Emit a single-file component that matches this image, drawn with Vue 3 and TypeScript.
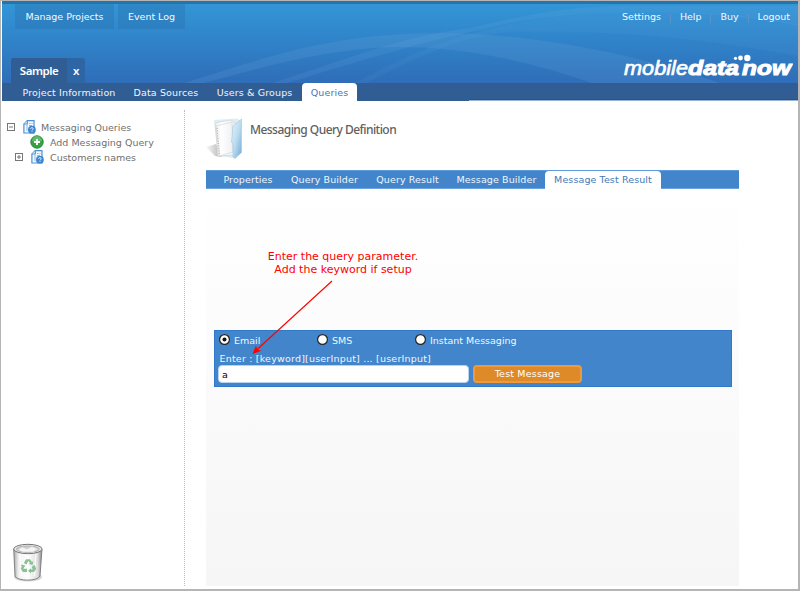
<script setup lang="ts">
import { ref } from 'vue'

interface Item { label: string; width: number }

const topButtons: Item[] = [
  { label: 'Manage Projects', width: 99 },
  { label: 'Event Log', width: 67 },
]
const accountLinks: string[] = ['Settings', 'Help', 'Buy', 'Logout']
const sections: Item[] = [
  { label: 'Project Information', width: 112 },
  { label: 'Data Sources', width: 82 },
  { label: 'Users & Groups', width: 95 },
  { label: 'Queries', width: 55 },
]
const steps: Item[] = [
  { label: 'Properties', width: 68 },
  { label: 'Query Builder', width: 85 },
  { label: 'Query Result', width: 81 },
  { label: 'Message Builder', width: 97 },
  { label: 'Message Test Result', width: 116 },
]
const channels: string[] = ['Email', 'SMS', 'Instant Messaging']

const section = ref('Queries')
const step = ref('Message Test Result')
const channel = ref('Email')
const message = ref('a')
</script>

<template>
  <div class="window">
    <header class="header">
      <svg class="swoosh" width="796" height="77" viewBox="2 6 796 77">
        <path class="s1" d="M184 83C265 58 330 33 440 33C530 33 640 55 720 83H592C520 58 455 46 390 47C330 49 270 65 204 83Z" />
        <path class="s2" d="M272 83C340 62 400 36 470 28C520 16 560 8 610 6H798V26C700 6 560 8 480 30C420 42 350 64 287 83Z" />
        <path class="s3" d="M355 83C430 42 500 14 640 12C720 11 770 18 798 24V56C700 38 620 30 510 32C450 38 410 62 366 83Z" />
      </svg>
      <div class="top-row">
        <nav class="top-buttons">
          <a v-for="b in topButtons" :key="b.label" :style="{ width: b.width + 'px' }">{{ b.label }}</a>
        </nav>
        <nav class="account">
          <a v-for="l in accountLinks" :key="l">{{ l }}</a>
        </nav>
      </div>
      <div class="brand-row">
        <div class="project"><span class="name">Sample</span><span class="close">x</span></div>
        <svg class="logo" width="172" height="30" viewBox="620 50 172 30">
          <text class="thin" x="623" y="74.6" textLength="64" lengthAdjust="spacingAndGlyphs">mobile</text>
          <text class="fat" x="687" y="74.6" textLength="51" lengthAdjust="spacingAndGlyphs">data</text>
          <text class="fat" x="741" y="74.6" textLength="49" lengthAdjust="spacingAndGlyphs">now</text>
          <circle cx="734.5" cy="58.3" r="1.6" /><circle cx="739.5" cy="58" r="2.4" /><circle cx="746.3" cy="58" r="3.2" />
        </svg>
      </div>
    </header>
    <nav class="sections">
      <a v-for="s in sections" :key="s.label" :class="{ active: s.label === section }" :style="{ width: s.width + 'px' }" @click="section = s.label">{{ s.label }}</a>
      <i class="nav-edge"></i>
    </nav>

    <div class="body">
      <aside class="sidebar">
        <ul class="tree">
          <li v-for="(t, i) in ['Messaging Queries', 'Add Messaging Query', 'Customers names']" :key="t" :class="'row' + i">
            <svg v-if="i !== 1" class="toggle" width="8" height="8" viewBox="0 0 8 8"><rect x=".5" y=".5" width="7" height="7" /><path :d="i === 0 ? 'M2 4H6' : 'M2 4H6M4 2V6'" /></svg>
            <svg v-if="i !== 1" class="doc" width="13" height="14" viewBox="0 0 13 14">
              <path class="page" d="M4.3 .7H11V13H.9V4Z" />
              <path class="page" d="M4.3 .7V4H.9" />
              <path class="lines" d="M6 3.5H7.5M8.5 3.5H9.5M3 6H5M6 5.5H9M3 8H5M3 10H5" />
              <circle class="ball" cx="8.9" cy="9.7" r="3.9" />
              <path class="mark" d="M7.6 8.8C7.6 7.3 10.3 7.4 10.2 8.8C10.1 9.6 9 9.6 9 10.5M9 11.3V12" />
            </svg>
            <svg v-else class="add" width="14" height="14" viewBox="0 0 14 14">
              <circle cx="7" cy="7" r="6.2" fill="#35a344" stroke="#27863a" />
              <path d="M2 6A5 5 0 0 1 12 6Q7 8 2 6" fill="#71c477" opacity=".7" />
              <path d="M7 4V10M4 7H10" stroke="#fff" stroke-width="1.8" />
            </svg>
            <span>{{ t }}</span>
          </li>
        </ul>
        <svg class="bin" width="34" height="40" viewBox="0 0 34 40">
          <defs>
            <linearGradient id="metal"><stop offset="0" stop-color="#aaa" /><stop offset=".18" stop-color="#f3f3f3" /><stop offset=".5" stop-color="#fff" /><stop offset=".85" stop-color="#ddd" /><stop offset="1" stop-color="#888" /></linearGradient>
          </defs>
          <ellipse cx="16" cy="34" rx="14" ry="4.5" fill="#bbb" opacity=".6" />
          <path d="M1.7 6L3 33C5 38.5 26 38.5 28 33L30 6Z" fill="url(#metal)" stroke="#777" stroke-width=".9" />
          <ellipse cx="15.9" cy="6" rx="14.2" ry="4.7" fill="#eee" stroke="#777" />
          <ellipse cx="15.9" cy="6.2" rx="11.6" ry="3.3" fill="#ccc" stroke="#999" stroke-width=".6" />
          <path d="M6 7L10 4L15 6L20 3.6L26 6L21 9H11Z" fill="#f5f5f5" stroke="#ccc" stroke-width=".5" />
          <path d="M8 11L9.5 33M23.8 11L22.5 33" stroke="#fff" stroke-width="1.4" opacity=".8" />
          <g fill="#8cc095" transform="translate(-1 -.5)">
            <path d="M12.8 20.5L15 16.8H19L21 19.4L22.4 18.6L21.6 22.6L17.6 21.4L19 20.6L17.3 18.5L15.4 22Z" />
            <path d="M20.6 24.2L23.5 22.6L25.2 26.2L23 29.5H20V31L17 28.3L20 25.7V27.1H21.8Z" />
            <path d="M10.8 22L14.7 23.3L13.5 24L12.4 26.3H16V29.5H11.8L9.7 26.1L11 23.8L9.8 23.3Z" />
          </g>
        </svg>
      </aside>

      <main class="main">
        <div class="title">
          <svg width="38" height="42" viewBox="206 118 38 42">
            <defs>
              <linearGradient id="blue" x1="0" y1="0" x2="1" y2="1"><stop offset="0" stop-color="#e3f3fb" /><stop offset=".5" stop-color="#bcdcf0" /><stop offset="1" stop-color="#6fa9d6" /></linearGradient>
              <linearGradient id="paper"><stop offset="0" stop-color="#ededed" /><stop offset=".3" stop-color="#fff" /><stop offset="1" stop-color="#edf0f2" /></linearGradient>
              <linearGradient id="shade"><stop offset="0" stop-color="#aaa" stop-opacity=".1" /><stop offset="1" stop-color="#888" stop-opacity=".7" /></linearGradient>
            </defs>
            <path d="M206 147L216 144L222 157L215 156Z" fill="url(#shade)" />
            <path d="M214 120L237 118.5L241 121V153L233 158L218 156Z" fill="#dcedf6" />
            <path d="M215 123L231 120L236 124L234 155L218 156Z" fill="url(#paper)" stroke="#c9c9c9" stroke-width=".5" />
            <path d="M216 126L232 122L233 152L219 156Z" fill="url(#paper)" stroke="#c8c8c8" stroke-width=".5" />
            <path d="M217 128L219.5 154" stroke="#aaa" stroke-width="1" stroke-dasharray="1 1.5" />
            <path d="M233 126L241.5 119V152.5L235 158.5L233 157V144L231.5 142Z" fill="url(#blue)" stroke="#9fc7e2" stroke-width=".6" />
          </svg>
          <h1>Messaging Query Definition</h1>
        </div>
        <nav class="steps">
          <a v-for="s in steps" :key="s.label" :class="{ active: s.label === step }" :style="{ width: s.width + 'px' }" @click="step = s.label">{{ s.label }}</a>
        </nav>
        <section class="panel">
          <div class="note">
            Enter the query parameter.<br>Add the keyword if setup
            <svg width="86" height="80" viewBox="250 278 86 80"><path d="M332 281L256 350.5" stroke="#f00" stroke-width="1.1" /><path d="M252.5 354L256 345.5L257.2 349.4L261.3 350.8Z" fill="#f00" /></svg>
          </div>
          <form class="tester" @submit.prevent>
            <div class="channels">
              <label v-for="c in channels" :key="c" @click="channel = c">
                <svg width="12" height="12" viewBox="0 0 12 12"><circle cx="5.5" cy="5.5" r="4.9" fill="#fff" stroke="#222" stroke-width="1.2" /><circle v-if="channel === c" cx="5.5" cy="5.5" r="2" fill="#111" /></svg>
                <span>{{ c }}</span>
              </label>
            </div>
            <p>Enter : [keyword][userInput] ... [userInput]</p>
            <div class="entry">
              <input v-model="message" type="text">
              <button type="submit">Test Message</button>
            </div>
          </form>
        </section>
      </main>
    </div>
  </div>
</template>

<style>
body { overflow: hidden; background: #fff; }
</style>

<style scoped>
* { box-sizing: border-box; }
.window { display: flex; flex-direction: column; width: 800px; height: 591px; border: 2px solid #b5b5b5; border-top-width: 1px; border-left-width: 1px; padding: 0 0 0 1px; font: 9.5px/14px "DejaVu Sans", Verdana, sans-serif; color: #666; background: #fff; }
a { white-space: nowrap; }
.header { position: relative; flex: none; height: 82px; border-top: 3px solid #2475ae; background: linear-gradient(#3396d6, #3082c8 50%, #2f6db8); }
.swoosh { position: absolute; left: 0; top: 2px; }
.s1 { fill: rgba(120, 175, 225, .16); }
.s2 { fill: rgba(120, 180, 230, .13); }
.s3 { fill: rgba(110, 175, 225, .08); }
.top-row { position: relative; display: flex; justify-content: space-between; height: 50px; color: #f4f9ff; letter-spacing: -.02px; }
.top-buttons { display: flex; gap: 4px; padding-left: 13px; }
.top-buttons a { height: 25px; padding-top: 6px; text-align: center; background: rgba(40, 110, 170, .35); }
.account { display: flex; padding: 6px 8px 0 0; }
.account a + a { margin-left: 9px; padding-left: 10px; background: linear-gradient(#5b94cc, #5b94cc) 0 4px / 1px 9px no-repeat; }
.brand-row { position: relative; display: flex; justify-content: space-between; align-items: flex-end; height: 29px; padding: 0 5px 0 9px; }
.project { display: flex; width: 74px; height: 25px; border-radius: 3px 3px 0 0; overflow: hidden; background: #2e65a4; color: #fff; font: 600 11.5px/26px "Noto Sans", sans-serif; letter-spacing: -.5px; }
.name { width: 56px; text-align: center; background: #305e94; }
.close { width: 18px; text-align: center; }
.logo { margin-bottom: 3px; fill: #fff; }
.logo text { font-family: "Liberation Sans", sans-serif; font-style: italic; }
.thin { font-size: 20px; stroke: #fff; stroke-width: .65; }
.fat { font-size: 20px; font-weight: bold; stroke: #fff; stroke-width: 1; }
.sections { display: flex; flex: none; height: 18px; padding-left: 11px; background: #305e94; color: #f0f5fa; line-height: 20px; text-align: center; letter-spacing: .13px; }
.sections a { flex: none; }
.sections .active, .steps .active { border-radius: 4px 4px 0 0; background: #fff; color: #4279b8; }
.nav-edge { width: 329px; margin-left: auto; border-bottom: 1px solid #9bb4d0; box-shadow: inset 0 -1px #28538a; }
.body { display: flex; flex: 1; min-height: 0; }
.sidebar { display: flex; flex-direction: column; justify-content: space-between; width: 183px; margin: 9px 0 3px; padding: 9px 0 3px 5px; border-right: 1px dotted #bbb; }
.tree { margin: 0; padding: 0; list-style: none; color: #707070; }
.tree li { display: flex; align-items: center; height: 15px; }
.tree svg { flex: none; }
.toggle { margin-right: 8px; fill: #fff; stroke: #777; }
.tree span { margin: 2px 0 0 5px; white-space: nowrap; }
.tree .row1 span, .tree .row2 span { margin-left: 6px; }
.row1 { padding-left: 23px; }
.row2 { padding-left: 8px; }
.page { fill: #f3f9ff; stroke: #4e91d3; stroke-width: 1.2; }
.lines { fill: none; stroke: #8db9e2; }
.ball { fill: #3d87d1; }
.mark { fill: none; stroke: #fff; stroke-width: .9; }
.bin { margin-left: 5px; }
.main { width: 533px; margin-left: 21px; padding-top: 17px; }
.title { display: flex; height: 52px; }
.title h1 { margin: 3px 0 0 6px; font: 500 12px/18px "Noto Sans", sans-serif; color: #606060; letter-spacing: -.54px; white-space: nowrap; }
.steps { display: flex; height: 19px; padding-left: 8px; border-top: 1px solid #5f9ce0; border-bottom: 1px solid #6ba3e0; background: #4285cb; color: #f0f6fd; line-height: 18px; text-align: center; letter-spacing: .11px; }
.steps .active { height: 18px; }
.panel { height: 397px; padding: 61px 7px 0 8px; background: linear-gradient(#fff, #f6f6f6); }
.note { position: relative; height: 80px; width: 258px; color: #f00; font-size: 11px; line-height: 13px; text-align: center; white-space: nowrap; }
.note svg { position: absolute; left: 36px; top: 28px; overflow: visible; }
.tester { height: 57px; padding: 3px 4px 0 3px; border: 1px solid #3078cc; background: #4285cb; color: #f0f6fd; }
.channels { display: flex; height: 14px; }
.channels label { display: flex; flex: none; width: 98px; white-space: nowrap; }
.channels svg { flex: none; margin-left: 1px; }
.channels span { margin-left: 3px; }
.tester p { margin: 4px 0 0 1.5px; height: 13px; letter-spacing: .2px; }
.entry { display: flex; gap: 4px; }
.entry input { width: 251px; height: 18px; padding: 0 3px; border: 1px solid #b8d3ef; border-radius: 4px; font: inherit; color: #000; background: #fff; outline: 0; }
.entry button { width: 109px; height: 18px; padding: 0; border: 2px solid #ee9a3b; border-radius: 4px; background: #df8a28; color: #fff; font: inherit; line-height: 14px; letter-spacing: .18px; }
</style>
